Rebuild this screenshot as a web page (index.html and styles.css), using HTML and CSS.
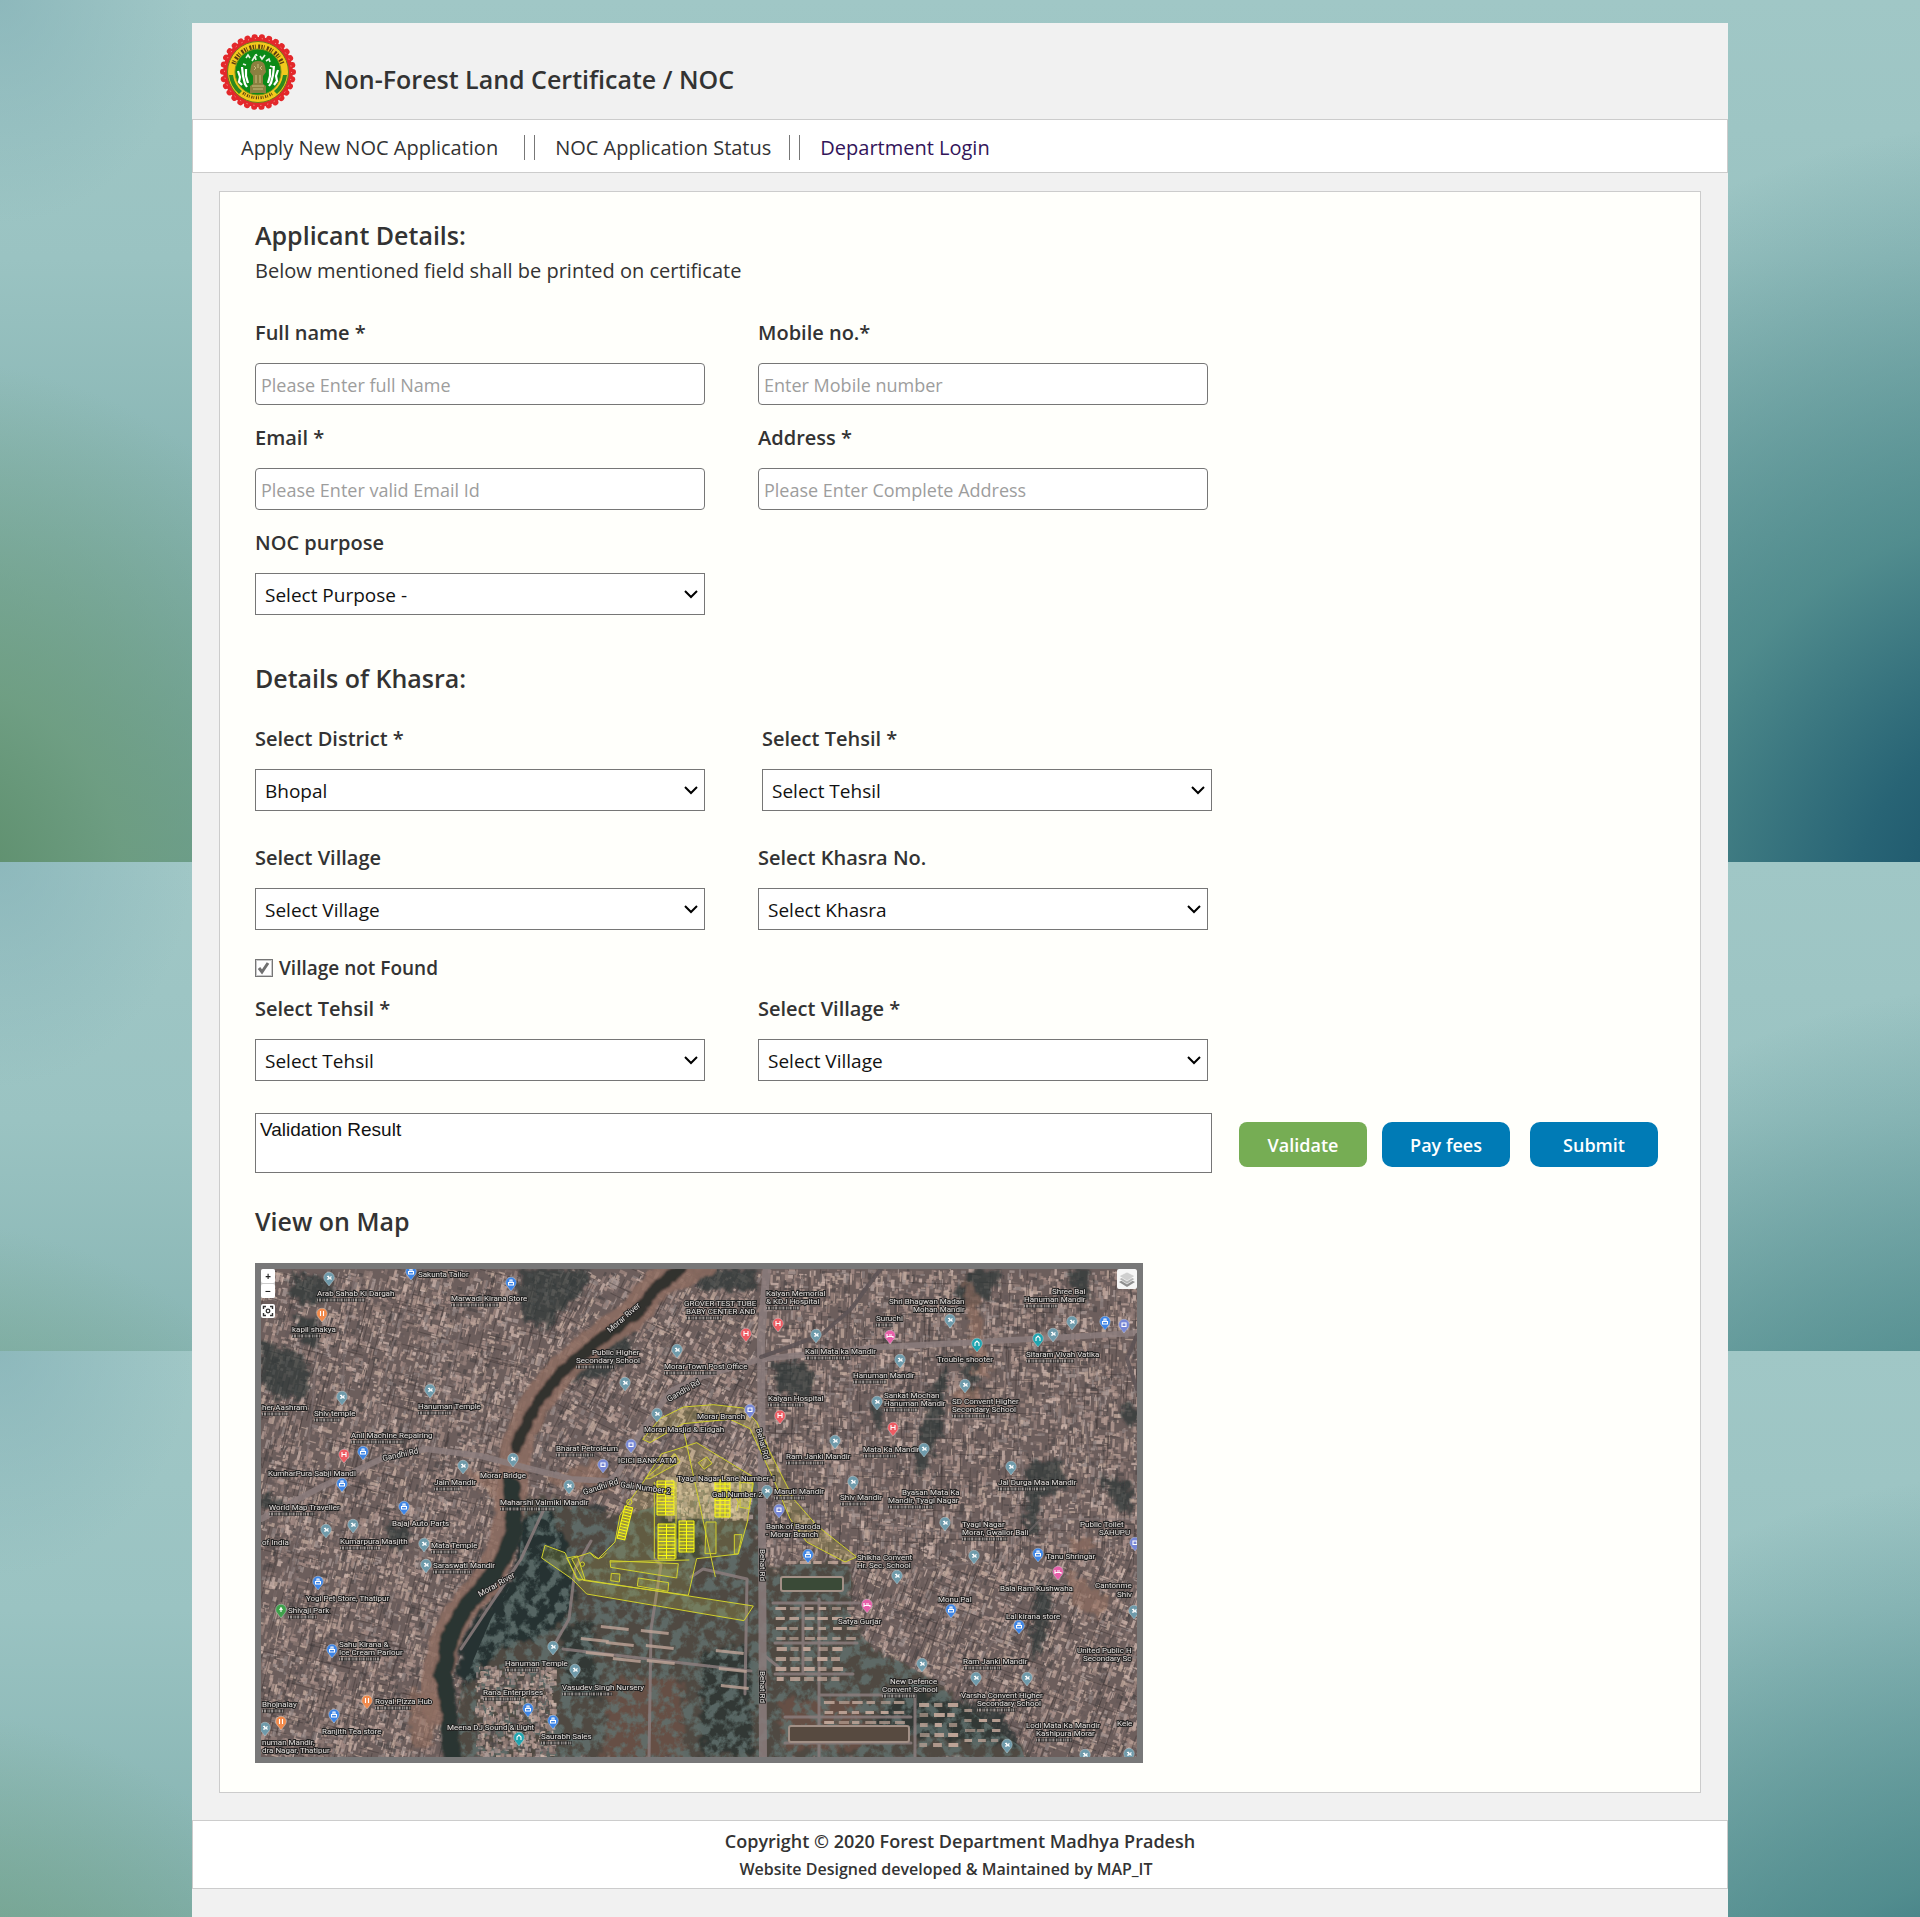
FILE: index.html
```html
<!DOCTYPE html>
<html lang="en">
<head>
<meta charset="utf-8">
<meta name="viewport" content="width=device-width, initial-scale=1">
<title>Non-Forest Land Certificate / NOC</title>
<link rel="stylesheet" href="styles.css">
</head>
<body>
<div class="page">
  <header class="masthead">
    <svg class="emblem" viewBox="-38 -38 76 76" aria-hidden="true">
      <circle r="35" fill="#e3282b"/>
      <circle r="35" fill="none" stroke="#e3282b" stroke-width="6" stroke-linecap="round" stroke-dasharray="0.1 7.23"/>
      <circle r="33.5" fill="none" stroke="#f7a6a0" stroke-width="1" stroke-dasharray="1 6.02"/>
      <circle r="30.5" fill="#f3c91c" stroke="#6d7a1c" stroke-width="1"/>
      <path d="M-24.500-8A26 26 0 0 1 24.500-8" fill="none" stroke="#5b3d10" stroke-width="4.500" stroke-dasharray="1.400 1 .8 2.400 2 1.200"/>
      <path d="M-15 21A26 26 0 0 0 15 21" fill="none" stroke="#5b3d10" stroke-width="3" stroke-dasharray="1.200 1 .8 1.600"/>
      <path d="M-29 3A29 29 0 0 0-19 22L-16 19A24 24 0 0 1-25 3ZM29 3A29 29 0 0 1 19 22L16 19A24 24 0 0 0 25 3Z" fill="#2e8a1e"/>
      <circle r="23" fill="#0b8a17" stroke="#7c8c1c" stroke-width="1"/>
      <path d="M-12-14l2-3 2 3M-6-11l3-5 1 4M2-16l2 3 3-4M8-11l3-2 1 3M-15-8l3 1M12-6l3 1M-2-18l1 2" fill="none" stroke="#e9f5e6" stroke-width="1.6"/>
      <path d="M-20-1l2 6-1 5 3 3M-16-5l1 9 2 8 2 3M-12-3l0 7 2 7M20-2l-2 6 1 5-3 4M16-6l-1 9-2 8-2 3M12-3l0 7-2 7" fill="none" stroke="#fff" stroke-width="2.2"/>
      <path d="M-7-6q1-5 7-5t7 5l1 6-3 4v8l3 2v7h-16v-7l3-2v-8l-3-4z" fill="#8b8040"/>
      <path d="M-4-6l2 2-2 2M4-6l-2 2 2 2M-2 3v8M2 3v8M-6 14h12M-5 17h10M0-8v4" stroke="#c9bd7c" stroke-width="1" fill="none"/>
    </svg>
    <h1 class="site-title">Non-Forest Land Certificate / NOC</h1>
  </header>

  <nav class="menu">
    <a class="menu-link" href="#apply">Apply New NOC Application</a>
    <span class="menu-bars menu-bars-wide"></span>
    <a class="menu-link" href="#status">NOC Application Status</a>
    <span class="menu-bars"></span>
    <a class="menu-link menu-link-visited" href="#login">Department Login</a>
  </nav>

  <main class="panel">
    <form class="form">
      <h2 class="section-title">Applicant Details:</h2>
      <p class="section-note">Below mentioned field shall be printed on certificate</p>

      <div class="row row-first">
        <div class="field">
          <label for="full-name">Full name *</label>
          <input class="control" id="full-name" type="text" placeholder="Please Enter full Name">
        </div>
        <div class="field">
          <label for="mobile">Mobile no.*</label>
          <input class="control" id="mobile" type="tel" placeholder="Enter Mobile number">
        </div>
      </div>
      <div class="row row-near">
        <div class="field">
          <label for="email">Email *</label>
          <input class="control" id="email" type="email" placeholder="Please Enter valid Email Id">
        </div>
        <div class="field">
          <label for="address">Address *</label>
          <input class="control" id="address" type="text" placeholder="Please Enter Complete Address">
        </div>
      </div>
      <div class="row row-near">
        <div class="field">
          <label for="purpose">NOC purpose</label>
          <select class="control" id="purpose"><option>Select Purpose -</option></select>
        </div>
      </div>

      <h2 class="section-title section-title-khasra">Details of Khasra:</h2>

      <div class="row row-khasra">
        <div class="field">
          <label for="district">Select District *</label>
          <select class="control" id="district"><option>Bhopal</option></select>
        </div>
        <div class="field">
          <label for="tehsil">Select Tehsil *</label>
          <select class="control" id="tehsil"><option>Select Tehsil</option></select>
        </div>
      </div>
      <div class="row row-far">
        <div class="field">
          <label for="village">Select Village</label>
          <select class="control" id="village"><option>Select Village</option></select>
        </div>
        <div class="field">
          <label for="khasra">Select Khasra No.</label>
          <select class="control" id="khasra"><option>Select Khasra</option></select>
        </div>
      </div>
      <div class="check">
        <input class="tick" id="not-found" type="checkbox" checked>
        <label for="not-found">Village not Found</label>
      </div>
      <div class="row">
        <div class="field">
          <label for="tehsil-2">Select Tehsil *</label>
          <select class="control" id="tehsil-2"><option>Select Tehsil</option></select>
        </div>
        <div class="field">
          <label for="village-2">Select Village *</label>
          <select class="control" id="village-2"><option>Select Village</option></select>
        </div>
      </div>

      <div class="actions">
        <textarea class="result" aria-label="Validation Result">Validation Result</textarea>
        <div class="buttons">
          <button class="button button-validate" type="button">Validate</button>
          <button class="button button-pay" type="button">Pay fees</button>
          <button class="button button-submit" type="submit">Submit</button>
        </div>
      </div>
    </form>

    <h2 class="section-title section-title-map">View on Map</h2>
    <div class="map">
      <canvas class="map-layer" id="ground" width="876" height="488"></canvas>
      <svg class="map-layer" id="overlay" viewBox="0 0 876 488" role="img" aria-label="Satellite map">
        <defs>
          <filter id="rough" x="-5%" y="-5%" width="110%" height="110%">
            <feTurbulence type="fractalNoise" baseFrequency=".14" numOctaves="4" seed="4"/>
            <feDisplacementMap in="SourceGraphic" scale="18" xChannelSelector="R" yChannelSelector="G"/>
            <feGaussianBlur stdDeviation="1"/>
          </filter>
          <filter id="soft" x="-5%" y="-5%" width="110%" height="110%">
            <feTurbulence type="fractalNoise" baseFrequency=".08" numOctaves="3" seed="7"/>
            <feDisplacementMap in="SourceGraphic" scale="7" xChannelSelector="R" yChannelSelector="G"/>
            <feGaussianBlur stdDeviation=".8"/>
          </filter>
          <filter id="grain" x="0" y="0" width="100%" height="100%">
            <feTurbulence type="fractalNoise" baseFrequency=".09" numOctaves="4" seed="9"/>
            <feColorMatrix values="0 0 0 0 .12  0 0 0 0 .17  0 0 0 0 .16  5 0 0 0 -2.2"/>
            <feComposite in2="SourceGraphic" operator="in"/>
          </filter>
          <path id="campus" d="M352 248L402 236L480 205L498 215L498 262L508 300L560 292L590 292L590 352L612 380L650 398L676 414L700 436L760 478L764 490H190L200 420L230 350L258 300L262 230L290 228Z"/>
          <path id="bazaar" d="M216 400L250 380L284 388L290 430L300 488H206Z"/>
        </defs>
        <g filter="url(#rough)">
          <g fill="#2d3637" opacity=".72">
            <path d="M30 5L70 8L74 28L40 40L30 20ZM0 72L40 85L50 100L44 130L10 128L0 112ZM34 45L60 52L58 80L38 74ZM260 0L330 0L320 28L300 40L290 60L262 50L256 20Z"/>
            <path d="M340 65L372 60L366 88L340 110L310 112L320 86ZM430 0L500 0L492 20L440 22ZM671 120L686 95L690 70L682 150L676 175L660 210L652 190ZM700 90L716 92L714 130L704 124ZM765 195L800 190L806 218L780 228L776 270L764 262ZM0 225L24 232L30 242L0 240ZM128 255L150 260L146 280L124 275ZM510 95L540 92L556 110L546 132L520 124ZM610 130L622 132L620 158L608 152ZM300 240L340 236L352 250L320 262Z"/>
            <path d="M836 205L872 215L870 245L856 240ZM864 130L876 140V160L862 150ZM710 0L740 4L730 30L704 40L694 24ZM806 0L826 0L830 30L820 32ZM780 310L790 330L782 380L770 390L772 340Z"/>
          </g>
          <use href="#campus" fill="#4f4a43"/>
          <path d="M262 250L290 240L300 262L318 300L310 345L284 368L240 380L210 415L195 410L200 370L226 335L250 310Z" fill="#263231"/>
          <path d="M298 360L330 350L340 430L310 425ZM440 380L490 378L492 485L440 485ZM400 250L440 250L440 290L400 290ZM610 460L760 480L740 440L640 420Z" fill="#25302f" opacity=".7"/>
          <path d="M350 408L420 410L424 488H340ZM520 430L600 432L600 480L520 480Z" fill="#6b5145" opacity=".8"/>
          <path d="M703 8Q722 30 722 62L730 110L716 106L708 60ZM696 118L720 122L716 140L690 142ZM284 210L340 190L350 222L296 216ZM148 420L176 428L170 480L150 478ZM805 300L850 330L836 350L812 336ZM190 195L225 208L245 214L238 244L226 220ZM810 270L830 268L836 280L812 286Z" fill="#94705f" opacity=".6"/>
        </g>
        <use href="#campus" filter="url(#grain)" opacity=".8"/>
        <g id="bazaar-roofs"></g>
        <g filter="url(#soft)" fill="none" stroke-linejoin="round" stroke-linecap="round">
          <path d="M442-6L398 12L372 46L339 68L300 102L272 137L256 175L250 232L240 284L226 312L200 340L184 372L174 415L176 440" stroke="#8d6c60" stroke-width="30" opacity=".85"/>
          <path d="M420 0L396 18L372 48L339 70L299 104L272 140L255 178" stroke="#33302f" stroke-width="12"/>
          <path d="M250 215L254 262L244 286L226 315L204 338L188 370L182 405L188 440L192 496" stroke="#2c3433" stroke-width="17"/>
        </g>
        <g fill="none" stroke="#8b7d7d" stroke-linecap="round" stroke-linejoin="round" opacity=".85">
          <path d="M0 250L60 218L120 190L165 180L220 187L270 200L310 210L348 212L356 205L382 160L410 122L440 108L500 90L620 78L700 74L876 64" stroke-width="6"/>
          <path d="M506-4L500 70L501 240L502 490" stroke-width="8"/>
          <path d="M500 88L560 66L590 40L612 10L620 0M876 66L866 90L876 120" stroke-width="4" stroke="#5d5456"/>
          <path d="M283 240L260 290L220 350L200 380M292 378L308 350L314 300L330 272M302 380L430 395L490 402M394 290L400 296L390 360L388 490M430 308L442 300L486 310L484 425" stroke-width="3"/>
          <path d="M558 330V488M512 334H598M514 374H596M514 405H592M542 334V405M558 426H654V488M524 448H650M524 474H650M500 384L520 400" stroke-width="3"/>
          <path d="M58 40L52 130L40 250L20 360M95 0L84 60L82 120M160 0L130 80L112 170M200 60L170 180L140 300L110 400M590 80L586 200L580 240M660 70L660 140L640 260M740 66L762 200L744 320M810 60L830 200M570 90L566 230M876 250L780 250L740 290L660 300M700 420L760 330L800 300M640 150H740M616 255L700 265" stroke-width="2" opacity=".5"/>
        </g>
        <g id="blocks" fill="#bfa598"></g>
        <g fill="#3a4a37" stroke="#a29086" stroke-width="2"><rect x="520" y="308" width="62" height="14" rx="2"/><rect x="528" y="457" width="120" height="16" rx="2" fill="#574a40"/></g>

        <g transform="translate(279 113) scale(.33333)" fill="#e8e040" fill-opacity=".16" stroke="#d2d22c" stroke-width="3">
          <path d="M308 172L360 110L430 75L520 68L610 78L650 120L690 210L760 350L830 430L950 525L915 540L800 480L750 410L700 290L630 140L570 112L430 125L330 182Z"/>
          <path d="M310 300L365 215L400 205L470 182L640 285L622 420L595 516L470 530L445 640L130 595L95 530L150 512L175 530L225 480L240 400L270 355Z" fill-opacity=".12"/>
          <path d="M15 490L75 512L110 590L640 672L612 716L140 636L95 590L5 528Z"/>
          <path d="M375 285L640 285L622 410H375Z" fill="#eadfa0" fill-opacity=".3" stroke="none"/>
          <path d="M210 536L415 545L410 588L212 556ZM80 528L112 522L135 592L115 595ZM295 588L386 602L384 628L292 612ZM214 574L240 576L238 600L212 596ZM498 420H528V515H495ZM475 242L500 225L516 244L492 262ZM315 290L405 215L420 240L330 290ZM583 458H606L594 516H583ZM600 300L640 304L628 380L600 376Z"/>
          <path d="M432 150L526 585M150 512Q175 548 200 512M268 352a8 8 0 1 1 0 16a8 8 0 1 1 0-16M127 540a6 6 0 1 1 0 13a6 6 0 1 1 0-13M343 300V530M408 300V530M210 540L448 534M580 330L595 360L590 385" fill="none"/>
        </g>
        <g id="plots" fill="#d3cb2b" fill-opacity=".5" stroke="#fbfb12" stroke-width="1"></g>
        <g id="labels" class="map-labels"></g>
        <g id="pins"></g>
      </svg>
      <div class="map-tools">
        <div class="map-zoom">
          <button class="map-button" type="button" aria-label="Zoom in">+</button>
          <button class="map-button" type="button" aria-label="Zoom out">−</button>
        </div>
        <button class="map-button" type="button" aria-label="Full extent">
          <svg viewBox="0 0 12 12" width="12" height="12"><path d="M1.500 4V1.500h2.500M8 1.500h2.500V4M10.500 8v2.500H8M4 10.500H1.500V8" fill="none" stroke="#333" stroke-width="1.400"/><circle cx="6" cy="6" r="1.800" fill="none" stroke="#333" stroke-width="1.300"/></svg>
        </button>
      </div>
      <button class="map-button map-layers" type="button" aria-label="Layers">
        <svg viewBox="0 0 18 18" width="18" height="18"><path d="M1 12l8-4 8 4-8 5z" fill="#8f8f8f"/><path d="M1 9l8-4 8 4-8 5z" fill="#b5b5b5" stroke="#fff" stroke-width=".6"/><path d="M1 6l8-4 8 4-8 5z" fill="#cfcfcf" stroke="#fff" stroke-width=".6"/></svg>
      </button>
    </div>
  </main>

  <footer class="footer">
    <p class="copyright">Copyright © 2020 Forest Department Madhya Pradesh</p>
    <p class="credit">Website Designed developed &amp; Maintained by MAP_IT</p>
  </footer>
</div>
<script src="map.js"></script>
</body>
</html>
```
FILE: styles.css
```css
:root {
  --ink: #333;
  --line: #ccc;
  --edge: #767676;
  --ui: "Open Sans", "Noto Sans", sans-serif;
  --dusk: radial-gradient(ellipse 40% 92% at 106% 106%, #134b64 0%, #286475 24%, #3f7f82bb 50%, #5a959500 100%);
  --grass: radial-gradient(ellipse 24% 62% at -3% 104%, #5b8c68 0%, #6d9c7bcc 40%, #86b09c00 100%);
  --haze: radial-gradient(ellipse 10% 26% at 0 0, #84b1b7aa 0%, #84b1b700 100%);
  --sky: linear-gradient(#a0c7c6 0%, #9ac3c2 30%, #85b3b1 62%, #6b9f9c 100%);
}

* { box-sizing: border-box; }

body {
  margin: 0;
  min-height: 100vh;
  display: flex;
  flex-direction: column;
  font-family: var(--ui);
  color: var(--ink);
  background:
    var(--dusk) 0 1351px / 100% 862px no-repeat,
    var(--grass) 0 1351px / 100% 862px no-repeat,
    var(--haze) 0 1351px / 100% 862px no-repeat,
    var(--sky) 0 1351px / 100% 862px no-repeat,
    var(--dusk) 0 862px / 100% 862px no-repeat,
    var(--grass) 0 862px / 100% 862px no-repeat,
    var(--haze) 0 862px / 100% 862px no-repeat,
    var(--sky) 0 862px / 100% 862px no-repeat,
    var(--dusk) 0 0 / 100% 862px no-repeat,
    var(--grass) 0 0 / 100% 862px no-repeat,
    var(--haze) 0 0 / 100% 862px no-repeat,
    var(--sky) 0 0 / 100% 862px no-repeat;
}

h1, h2, p { margin: 0; }
button, input, select, textarea { font-family: inherit; margin: 0; }

.page {
  width: 80%;
  margin: 23px auto 0;
  padding-bottom: 30px;
  flex: 1;
  background: #f1f1f1;
}

.masthead {
  display: flex;
  align-items: flex-start;
  gap: 28px;
  padding: 11px 28px 9px;
}
.emblem { width: 76px; height: 76px; flex: none; }
.site-title {
  margin-top: 27px;
  font-size: 25px;
  line-height: 36px;
  font-weight: 600;
}

.menu {
  display: flex;
  align-items: center;
  height: 54px;
  padding: 3px 48px 0;
  border: 1px solid var(--line);
  background: #fff;
}
.menu-link { font-size: 20px; line-height: 24px; color: var(--ink); text-decoration: none; }
.menu-link-visited { color: #32145a; }
.menu-bars {
  width: 11px;
  height: 25px;
  margin: 0 20px 0 18px;
  border: solid #777;
  border-width: 0 1px;
}
.menu-bars-wide { margin-left: 26px; }

.panel {
  margin: 18px 27px 27px;
  padding: 25px 35px 29px;
  border: 1px solid var(--line);
  background: #fffffb;
}

.section-title { font-size: 25px; line-height: 36px; font-weight: 600; }
.section-note { font-size: 20px; line-height: 36px; }
.section-title-khasra { margin-top: 45px; }
.section-title-map { margin-top: 30px; }

.row {
  display: grid;
  grid-template-columns: repeat(2, minmax(0, 450px));
  column-gap: 53px;
}
.row-first { margin-top: 31px; }
.row-near { margin-top: 20px; }
.row-khasra { margin-top: 30px; column-gap: 57px; }
.row-far { margin-top: 34px; }

.field { display: flex; flex-direction: column; gap: 17px; }
.field label { font-size: 20px; line-height: 26px; font-weight: 600; }

.control {
  width: 100%;
  height: 42px;
  padding: 2px 5px 0;
  border: 1px solid var(--edge);
  border-radius: 4px;
  background: #fff;
  font-size: 18px;
  color: #111;
}
.control::placeholder { color: #9d9d9d; }
select.control {
  appearance: none;
  padding: 2px 32px 0 9px;
  border-radius: 0;
  font-size: 19px;
  background: #fff url("data:image/svg+xml,%3Csvg xmlns='http://www.w3.org/2000/svg' width='14' height='9'%3E%3Cpath d='M1 1l6 6 6-6' fill='none' stroke='%23000' stroke-width='2'/%3E%3C/svg%3E") no-repeat right 6px center;
}

.check {
  display: flex;
  align-items: center;
  gap: 6px;
  margin: 26px 0 16px;
}
.check label { font-size: 19px; line-height: 24px; font-weight: 600; }
.tick {
  appearance: none;
  width: 18px;
  height: 18px;
  border: 1px solid var(--edge);
  outline: 1px solid #c9c9c9;
  outline-offset: -2px;
  background: #fff url("data:image/svg+xml,%3Csvg xmlns='http://www.w3.org/2000/svg' width='16' height='16'%3E%3Cpath d='M3 8l3 4 6-9' fill='none' stroke='%23707070' stroke-width='3'/%3E%3C/svg%3E") center no-repeat;
}

.actions { display: flex; align-items: center; gap: 27px; margin-top: 32px; }
.result {
  flex: 0 1 957px;
  min-width: 0;
  height: 60px;
  padding: 4px;
  border: 1px solid var(--edge);
  resize: none;
  font-family: "Liberation Sans", Arial, sans-serif;
  font-size: 19px;
  line-height: 24px;
  color: #111;
}
.buttons { display: flex; gap: 15px; padding-top: 3px; }
.button {
  width: 128px;
  height: 45px;
  padding: 0;
  border: 0;
  border-radius: 10px;
  background: #007bb6;
  color: #fff;
  font-size: 18px;
  font-weight: 600;
}
.button-validate { border-radius: 8px; background: #76ad54; }
.button-submit { margin-left: 5px; }

.map {
  position: relative;
  display: grid;
  width: 100%;
  max-width: 888px;
  margin-top: 24px;
  border: 6px solid #787878;
  overflow: hidden;
}
.map-layer { grid-area: 1 / 1; display: block; width: 100%; height: auto; }
.map-labels {
  font-family: Roboto, sans-serif;
  font-size: 8px;
  fill: #e4dfdc;
  stroke: #222;
  stroke-width: 2px;
  paint-order: stroke;
}
.map-tools { position: absolute; left: 0; top: 0; display: grid; gap: 6px; }
.map-zoom { display: grid; gap: 1px; background: #ccc; border-radius: 2px; }
.map-button {
  display: grid;
  place-items: center;
  width: 14px;
  height: 14px;
  padding: 0;
  border: 0;
  border-radius: 2px;
  background: #fff;
  color: #222;
  font-size: 10px;
  line-height: 14px;
  font-weight: 700;
}
.map-layers { position: absolute; right: 0; top: 0; width: 20px; height: 20px; background: #f6f6f6; }

.footer {
  padding: 7px 0 4px;
  border: 1px solid var(--line);
  background: #fff;
  text-align: center;
  font-weight: 600;
}
.copyright { font-size: 18px; line-height: 26px; }
.credit { padding-right: 28px; font-size: 16px; line-height: 30px; }
```
FILE: map.js
```js
(function () {
  var seed = 12345;
  function rnd() {
    seed = (seed * 1664525 + 1013904223) % 4294967296;
    return seed / 4294967296;
  }
  function tiltAt(x, y) {
    return x < 300 ? 0.25 : x < 500 ? 0.45 : y > 280 ? 0.35 : 0.04;
  }

  // Rooftops: short tilted blocks in dusty tones, with dark alleys between them.
  var ctx = document.getElementById('ground').getContext('2d');
  ctx.fillStyle = '#6c5e5c';
  ctx.fillRect(0, 0, 876, 488);
  var tones = ['#b9a097', '#a99089', '#947f79', '#cdb6ac', '#665a59', '#8a7771', '#504a4a', '#a08880', '#7a6a67', '#a89894', '#c2a99c', '#8c807f'];
  function roofs(count, x0, y0, w, h) {
    for (var i = 0; i < count; i++) {
      var x = x0 + rnd() * w, y = y0 + rnd() * h;
      ctx.save();
      ctx.translate(x, y);
      ctx.rotate(tiltAt(x, y));
      ctx.globalAlpha = 0.75;
      ctx.fillStyle = tones[Math.floor(rnd() * tones.length)];
      if (rnd() < 0.6) ctx.fillRect(0, 0, 1 + rnd() * 3, 2 + rnd() * 8);
      else ctx.fillRect(0, 0, 2 + rnd() * 6, 1 + rnd() * 3);
      ctx.restore();
    }
  }
  roofs(26000, 0, 0, 876, 488);
  for (var a = 0; a < 1500; a++) {
    var ax = rnd() * 876, ay = rnd() * 488;
    ctx.save();
    ctx.translate(ax, ay);
    ctx.rotate(tiltAt(ax, ay) + (rnd() < 0.25 ? 1.57 : 0));
    ctx.globalAlpha = 0.4;
    ctx.fillStyle = '#37302f';
    ctx.fillRect(0, 0, 1, 8 + rnd() * 36);
    ctx.restore();
  }

  var NS = 'http://www.w3.org/2000/svg';
  function add(parent, tag, attrs, text) {
    var el = document.createElementNS(NS, tag);
    for (var k in attrs) el.setAttribute(k, attrs[k]);
    if (text) el.textContent = text;
    parent.appendChild(el);
    return el;
  }

  // Dense roofs on the campus edge: by the river and north of the plots.
  var bazaar = document.getElementById('bazaar-roofs');
  for (var n = 0; n < 1500; n++) {
    var south = n < 900;
    var bx = south ? 214 + rnd() * 78 : 404 + rnd() * 84, by = south ? 396 + rnd() * 92 : 206 + rnd() * 42;
    add(bazaar, 'rect', { x: bx.toFixed(1), y: by.toFixed(1), width: (1 + rnd() * 4).toFixed(1), height: (1 + rnd() * 5).toFixed(1), fill: tones[Math.floor(rnd() * tones.length)], opacity: 0.85 });
  }

  // Barracks and campus houses.
  var blocks = document.getElementById('blocks');
  [[514, 338, 6, 4, 2], [514, 378, 5, 4, 3], [562, 432, 6, 3, 2], [658, 434, 3, 5, 3], [702, 440, 3, 4, 2], [524, 292, 6, 1, 2]].forEach(function (b) {
    for (var r = 0; r < b[3]; r++) for (var c = 0; c < b[2]; c++) {
      add(blocks, 'rect', { x: b[0] + c * 14 + rnd() * 2, y: b[1] + r * 10, width: 7 + rnd() * 4, height: b[4] + 1, opacity: 0.6 + rnd() * 0.4 });
    }
  });
  [[340, 356], [380, 360], [320, 368], [345, 372], [385, 375], [325, 382], [352, 388], [386, 390], [455, 380], [458, 398], [460, 415]].forEach(function (p) {
    add(blocks, 'rect', { x: p[0], y: p[1], width: 28, height: 3, transform: 'rotate(6 ' + p[0] + ' ' + p[1] + ')', opacity: 0.8 });
  });

  // Surveyed plots: x, y, width, height, columns, rows, tilt.
  var plots = document.getElementById('plots');
  [[396, 212, 17, 34, 2, 10, 0], [397, 255, 17, 35, 2, 10, 0], [418, 252, 15, 31, 2, 9, 0], [454, 211, 15, 37, 3, 9, 0], [364, 237, 8, 33, 1, 11, 14]].forEach(function (p) {
    var d = 'M' + p[0] + ' ' + p[1] + 'h' + p[2] + 'v' + p[3] + 'h-' + p[2] + 'z';
    for (var r = 1; r < p[5]; r++) d += 'M' + p[0] + ' ' + (p[1] + p[3] * r / p[5]) + 'h' + p[2];
    for (var c = 1; c < p[4]; c++) d += 'M' + (p[0] + p[2] * c / p[4]) + ' ' + p[1] + 'v' + p[3];
    add(plots, 'path', { d: d, transform: 'rotate(' + p[6] + ' ' + p[0] + ' ' + p[1] + ')' });
  });

  var colours = { s: '#6f9bab', b: '#3c84e6', r: '#ee5b62', o: '#f28a4b', p: '#e85fa9', v: '#7787d6', t: '#1fa5b0', g: '#3fa14b' };
  var pins = document.getElementById('pins');
  ('s68,9 b150,3 b250,14 o61,45 s81,128 s169,121 r83,186 b102,183 b81,215 s202,197 s252,190 b143,238 s65,261 s92,256 s163,275 s165,296 b57,313 g20,341 b71,381 o106,432 o20,453 s4,459 b73,446 s308,217 v342,196 v370,176 s396,145 s416,81 s364,114 s292,378 s314,401 b267,440 b292,452 t258,469 ' +
   'r485,65 r517,55 s555,66 p629,67 s689,51 t716,75 t777,70 s792,65 s811,53 b844,53 v863,56 s639,91 s704,116 s616,133 r519,147 r632,159 v489,141 s574,172 s663,180 s592,213 s750,198 s506,222 v518,241 s684,254 s713,287 b777,285 p797,303 b547,286 s636,307 p606,336 b690,341 b758,357 s661,395 s715,409 s766,409 s746,476 s824,486 s868,485 v874,274 s873,342').split(' ').forEach(function (t) {
    var xy = t.slice(1).split(','), kind = t.charAt(0);
    var g = add(pins, 'g', { transform: 'translate(' + xy[0] + ' ' + xy[1] + ')' });
    add(g, 'path', { d: 'M0 8L-4 3A5.3 5.3 0 1 1 4 3Z', fill: colours[kind], stroke: '#d5dde0', 'stroke-width': 0.4 });
    var marks = { r: 'M-2-3V2M2-3V2M-2-.5H2', b: 'M-2.5-.5h5v2.500h-5zM-1-1v-2h2v2', o: 'M-1.500-3V2M1.500-3V2', p: 'M-3-2V2M-3 .5h6v1.500M-1-1h3', s: 'M-2-1.500q2.500-1 1.500 1q2 2-1.500 1.500M.5 0l2-1.500M1 0l1.500 1.500', v: 'M-2-2h4v3.500h-4z', t: 'M-2 2v-3l2-2 2 2v3', g: 'M0-3v5M-1.500 0L0-2l1.500 2' };
    add(g, 'path', { d: marks[kind], fill: 'none', stroke: '#fff', 'stroke-width': 1.1 });
  });

  // Place names: x, y, text, optional angle. A trailing * adds a local-script line below.
  var labels = document.getElementById('labels');
  [[157, 8, 'Sakunta Tailor'], [56, 27, 'Arab Sahab Ki Dargah*'], [31, 63, 'kapil shakya*'], [190, 32, 'Marwadi Kirana Store*'], [349, 64, 'Morar River', -41],
   [331, 86, 'Public Higher'], [315, 94, 'Secondary School*'], [157, 140, 'Hanuman Temple*'], [53, 147, 'Shiv temple*'], [90, 169, 'Anil Machine Repairing*'], [122, 192, 'Gandhi Rd', -12],
   [7, 207, 'KumharPura Sabji Mandi'], [173, 216, 'Jain Mandir*'], [219, 209, 'Morar Bridge'], [8, 241, 'World Map Traveller*'], [131, 257, 'Bajaj Auto Parts'],
   [79, 275, 'Kumarpura Masjith*'], [170, 279, 'Mata Temple*'], [172, 299, 'Saraswati Mandir*'], [1, 276, 'of India'], [1, 141, 'her Aashram*'], [45, 332, 'Yogi Pet Store, Thatipur'],
   [27, 344, 'Shivaji Park*'], [78, 378, 'Sahu Kirana &'], [78, 386, 'Ice Cream Parlour*'], [114, 435, 'Royal Pizza Hub*'], [1, 438, 'Bhojnalay*'], [61, 465, 'Ranjith Tea store'],
   [1, 476, 'numan Mandir,'], [1, 484, 'dra Nagar, Thatipur'], [239, 236, 'Maharshi Valmiki Mandir*'], [295, 182, 'Bharat Petroleum*'], [357, 194, 'ICICI BANK ATM'], [323, 226, 'Gandhi Rd', -18],
   [219, 328, 'Morar River', -30], [244, 397, 'Hanuman Temple*'], [301, 421, 'Vasudev Singh Nursery*'], [222, 426, 'Rana Enterprises*'], [186, 461, 'Meena DJ Sound & Light'], [280, 470, 'Saurabh Sales*'],
   [403, 100, 'Morar Town Post Office*'], [408, 133, 'Gandhi Rd', -30], [423, 37, 'GROVER TEST TUBE'], [425, 45, 'BABY CENTER AND*'], [505, 27, 'Kalyan Memorial'], [505, 35, '& KDJ Hospital*'],
   [628, 35, 'Shri Bhagwan Madan'], [652, 43, 'Mohan Mandir'], [615, 52, 'Suruchi*'], [791, 25, 'Shree Bai'], [763, 33, 'Hanuman Mandir*'], [544, 85, 'Kali Mata ka Mandir*'], [676, 93, 'Trouble shooter'],
   [765, 88, 'Sitaram Vivah Vatika*'], [592, 109, 'Hanuman Mandir*'], [623, 129, 'Sankat Mochan'], [623, 137, 'Hanuman Mandir*'], [691, 135, 'SD Convent Higher'], [691, 143, 'Secondary School*'],
   [507, 132, 'Kalyan Hospital*'], [436, 150, 'Morar Branch'], [383, 163, 'Morar Masjid & Eidgah'], [525, 190, 'Ram Janki Mandir*'], [602, 183, 'Mata Ka Mandir*'], [737, 216, 'Jai Durga Maa Mandir*'],
   [513, 225, 'Maruti Mandir*'], [579, 231, 'Shiv Mandir*'], [641, 226, 'Byasan Mata Ka'], [627, 234, 'Mandir, Tyagi Nagar*'], [505, 260, 'Bank of Baroda'], [505, 268, '- Morar Branch'],
   [701, 258, 'Tyagi Nagar'], [701, 266, 'Morar, Gwalior Bali*'], [819, 258, 'Public Toilet'], [838, 266, 'SAHUPU'], [785, 290, 'Tanu Shringar'], [596, 291, 'Shikha Convent'], [596, 299, 'Hr. Sec. School'],
   [739, 322, 'Bala Ram Kushwaha'], [834, 319, 'Cantonme'], [856, 328, 'Shiv'], [677, 333, 'Monu Pal'], [745, 350, 'Lal kirana store'], [577, 355, 'Satya Gurjar'], [816, 384, 'United Public H'],
   [822, 392, 'Secondary Sc'], [702, 395, 'Ram Janki Mandir*'], [629, 415, 'New Defence'], [621, 423, 'Convent School*'], [700, 429, 'Varsha Convent Higher'], [716, 437, 'Secondary School*'],
   [765, 459, 'Lodi Mata Ka Mandir'], [775, 467, 'Kashipura Morar*'], [856, 457, 'Kele'], [499, 280, 'Behat Rd', 90], [499, 402, 'Behat Rd', 90], [495, 160, 'Behat Rd', 75],
   [359, 218, 'Gali Number 2', 8], [416, 212, 'Tyagi Nagar Lane Number 1'], [451, 228, 'Gali Number 2']].forEach(function (l) {
    var two = /\*$/.test(l[2]), text = l[2].replace(/\*$/, '');
    add(labels, 'text', l[3] ? { transform: 'translate(' + l[0] + ' ' + l[1] + ') rotate(' + l[3] + ')' } : { x: l[0], y: l[1] }, text);
    if (two) {
      var w = text.length * 2.4, d = 'M' + l[0] + ' ' + (l[1] + 4) + 'h' + w;
      add(labels, 'path', { d: d, fill: 'none', stroke: '#222', 'stroke-width': 4, opacity: 0.8 });
      add(labels, 'path', { d: d, fill: 'none', stroke: '#c9c2be', 'stroke-width': 3, 'stroke-dasharray': '1 1 2 1.500 1 .7', opacity: 0.7 });
    }
  });
})();
```
